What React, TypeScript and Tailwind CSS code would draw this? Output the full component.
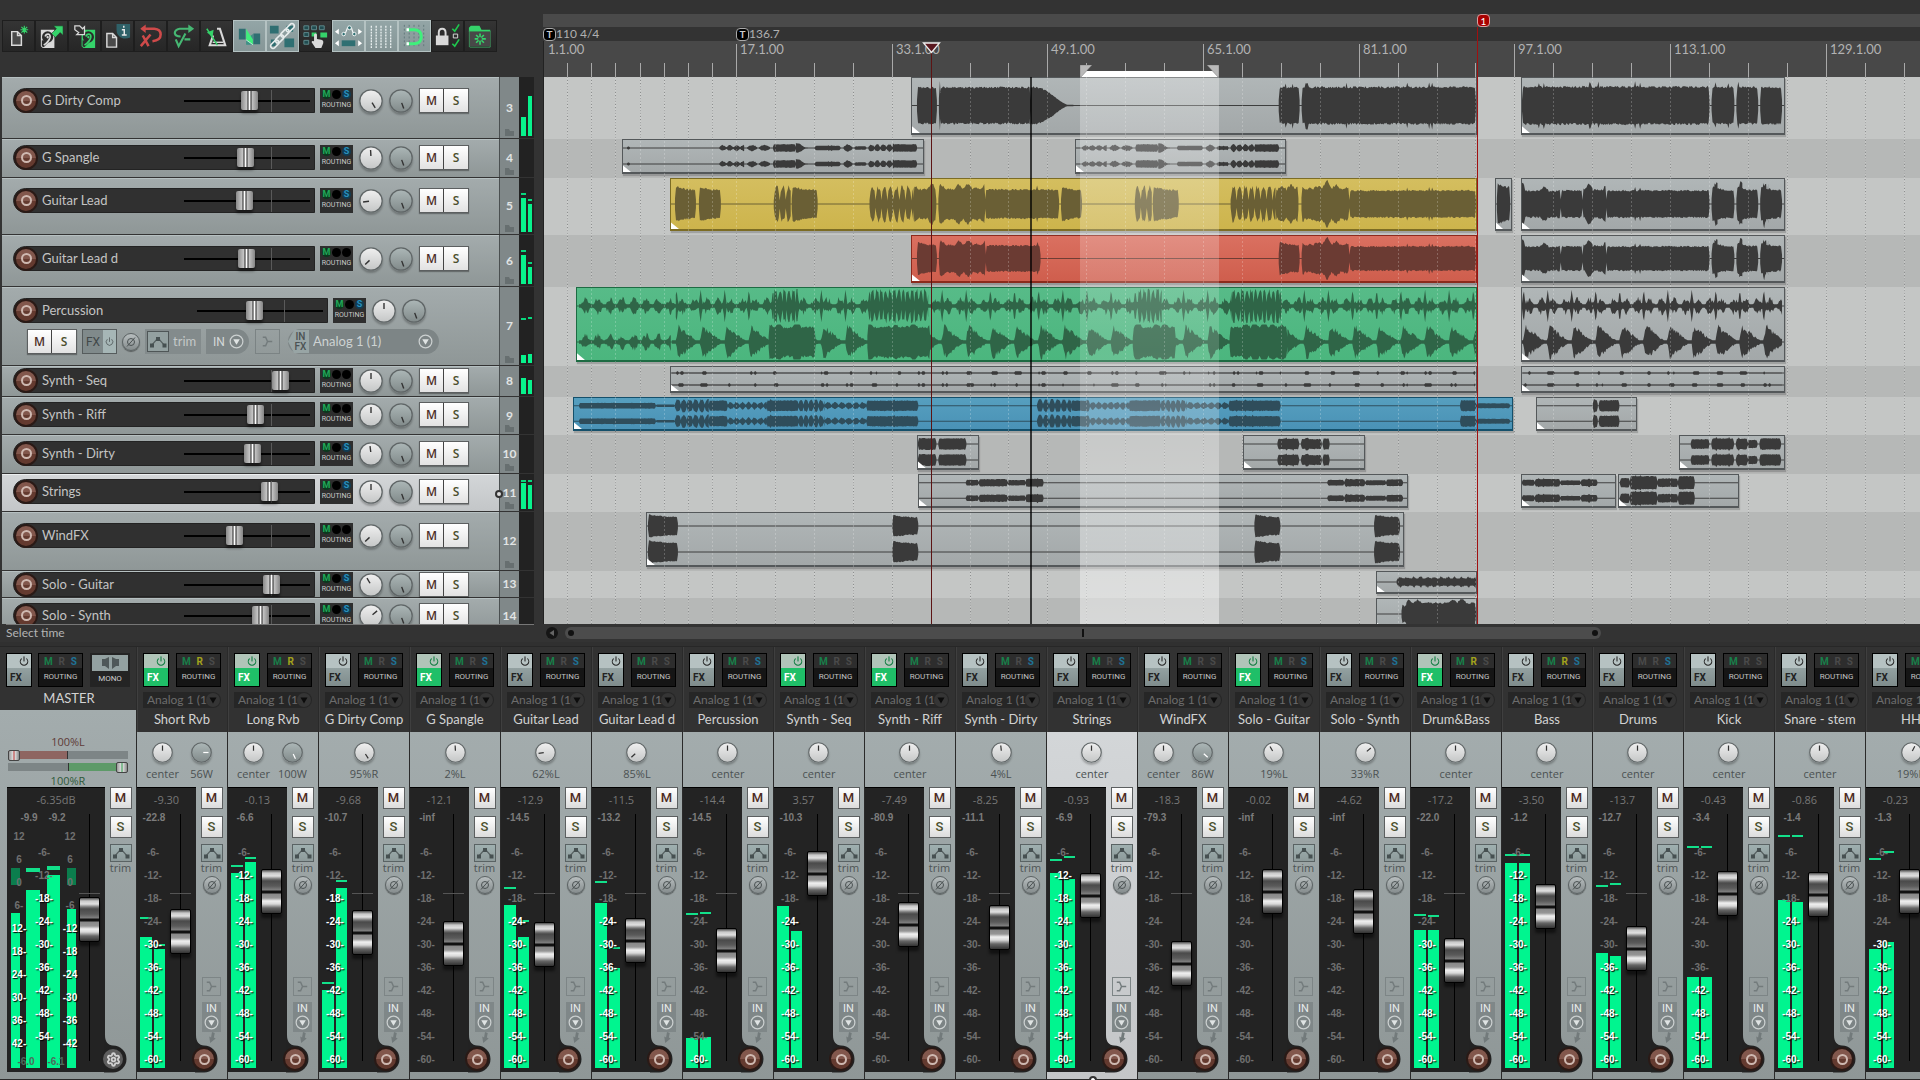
import React from "react";
import { Power, Settings } from "lucide-react";

/* ---------------------------------------------------------------- types */

type Seg = { a: number; b: number; amp: number; kind: "solid" | "decay" | "burst" | "beads" | "perc" | "percLow" | "taper" | "dots" | "spiky"; p?: number };
type Clip = { a: number; b: number; tone?: Tone; stereo?: boolean; segs: Seg[]; segs2?: Seg[] };
type Tone = "gray" | "yellow" | "red" | "green" | "blue";

const ORIGIN = 544;

/* ------------------------------------------------------------ waveforms */

const noise = (n: number) => {
  const v = Math.sin(n * 12.9898) * 43758.5453;
  return v - Math.floor(v);
};

function level(s: Seg, x: number, side: number) {
  const n = noise(x * 1.37 + side * 57.3 + s.amp * 11);
  const t = (x - s.a) / Math.max(1, s.b - s.a);
  const edge = Math.min(1, (x - s.a) / 1.5 + 0.3, (s.b - x) / 1.5 + 0.3);
  const p = s.p ?? 5;
  const ph = ((x - s.a) % p) / p;
  switch (s.kind) {
    case "solid":
      return s.amp * (0.93 + 0.12 * n + (noise(x * 3.1) > 0.95 ? 0.25 : 0)) * edge;
    case "spiky": {
      const k = Math.floor(x / 9);
      const d = Math.abs((x % 9) - 4.5) / 4.5;
      return s.amp * (0.78 + 0.14 * n + Math.max(0, noise(k * 2.7) - 0.3) * 0.75 * (1 - d)) * edge;
    }
    case "decay":
      return s.amp * (1.18 - 0.26 * Math.sin(Math.PI * Math.min(1, t * 1.2) * 0.5) + 0.14 * n) * edge;
    case "taper":
      return s.amp * Math.max(0.04, 0.5 + 0.5 * Math.cos(Math.PI * Math.pow(Math.min(1, t * 1.05), 1.25))) * (0.94 + 0.1 * n);
    case "burst":
      return s.amp * Math.max(0.25, Math.min(1, Math.sin(Math.PI * ph) * 1.5)) * (0.85 + 0.3 * n);
    case "beads":
      return s.amp * (0.3 + 0.8 * Math.abs(Math.sin(Math.PI * ph))) * (0.75 + 0.35 * n);
    case "perc": {
      const q = ((x - 675.7 + 2420) % 24.2) / 24.2;
      const r = ((x - 675.7 + 2420) % 12.1) / 12.1;
      const spike = s.amp > 0.5 ? Math.max(0, 1 - Math.min(q, 1 - q) * 12) * 0.95 : 0;
      const body = Math.pow(Math.max(0, Math.sin(Math.PI * r)), 1.4) * 0.42 * (0.45 + 0.8 * n);
      return Math.max(spike, body, 0.1);
    }
    case "percLow": {
      const q = ((x - 675.7 + 2420) % 24.2) / 24.2;
      const rise = Math.min(1, 0.2 + q * 9);
      return Math.max(0.1, s.amp * rise * Math.pow(1 - q, 1.25) * (0.75 + 0.5 * n));
    }
    case "dots": {
      const q = (x - 675.7 + 2420) % 24.2;
      return q < 7 && noise(Math.floor(x / 2) * 5.3 + s.amp * 70) > 0.4 ? 0.28 : 0.05;
    }
  }
}

function wave(segs: Seg[], off: number, cy: number, half: number) {
  return segs
    .map((s) => {
      const up: string[] = [];
      const down: string[] = [];
      for (let x = s.a; x <= s.b; x += 1) {
        up.push(`${(x - off).toFixed(1)} ${(cy - half * Math.min(0.98, level(s, x, 0))).toFixed(1)}`);
        down.unshift(`${(x - off).toFixed(1)} ${(cy + half * Math.min(0.98, level(s, x, 1))).toFixed(1)}`);
      }
      return `M${up.join("L")}L${down.join("L")}Z`;
    })
    .join("");
}

const sg = (a: number, b: number, amp: number, kind: Seg["kind"] = "solid", p?: number): Seg => ({ a, b, amp, kind, p });
const shift = (list: Seg[], d: number) => list.map((s) => ({ ...s, a: s.a + d, b: s.b + d }));
const tail = (amp: number) => [sg(1521, 1528, 0.85, "taper"), sg(1522, 1560, 0.62, "spiky"), sg(1560, 1582, amp), sg(1582, 1606, 0.66, "spiky"), sg(1606, 1710, amp), sg(1712, 1735, 0.56, "decay"), sg(1714, 1718, 0.85, "burst"), sg(1737, 1759, 0.56, "decay"), sg(1739, 1743, 0.85, "burst"), sg(1761, 1783, 0.56, "decay"), sg(1763, 1769, 0.85, "burst")];

const spangle = [sg(719, 744, 0.34, "beads", 7), sg(747, 757, 0.36, "beads", 10), sg(759, 770, 0.36, "beads", 11), sg(773, 796, 0.46, "solid"), sg(796, 808, 0.6, "taper"), sg(815, 841, 0.28, "solid"), sg(844, 853, 0.4, "beads", 9), sg(855, 867, 0.22), sg(869, 893, 0.44, "beads", 6), sg(893, 918, 0.46)];
const leadBursts = [sg(773, 790, 0.66, "burst", 6), sg(791, 817, 0.56, "decay")];
const riff = [sg(674, 708, 0.76, "burst", 6), sg(708, 727, 0.66), sg(727, 766, 0.46, "beads", 6), sg(766, 798, 0.68), sg(798, 824, 0.72, "burst", 5), sg(824, 866, 0.42, "beads", 7), sg(866, 918, 0.66)];
const dense = (a: number, b: number) => sg(a, b, 0.85, "burst", 4.4);

const lanes: { h: number; clips: Clip[] }[] = [
  {
    h: 62,
    clips: [
      { a: 911, b: 1477, segs: [sg(916, 936, 0.66), sg(938, 940, 0.9), sg(939, 1030, 0.66), sg(1030, 1073, 0.68, "taper"), sg(1279, 1300, 0.66), sg(1302, 1477, 0.67)] },
      { a: 1521, b: 1785, segs: [sg(1521, 1710, 0.68), sg(1712, 1735, 0.67), sg(1737, 1759, 0.67), sg(1761, 1783, 0.67)] },
    ],
  },
  {
    h: 39,
    clips: [
      { a: 622, b: 924, stereo: true, segs: [sg(626, 629, 0.2), ...spangle] },
      { a: 1075, b: 1286, stereo: true, segs: shift(spangle, 362) },
    ],
  },
  {
    h: 57,
    clips: [
      {
        a: 670, b: 1477, tone: "yellow",
        segs: [sg(674, 695, 0.58, "decay"), sg(698, 720, 0.56, "decay"), ...leadBursts, sg(869, 913, 0.66, "burst", 6), sg(913, 936, 0.68, "spiky"), sg(938, 985, 0.72, "spiky"), sg(985, 1059, 0.58), sg(1061, 1082, 0.56, "decay"), ...shift(leadBursts, 362), sg(1231, 1276, 0.66, "burst", 6), sg(1276, 1299, 0.68, "spiky"), sg(1302, 1350, 0.72, "spiky"), sg(1350, 1477, 0.54)],
      },
      { a: 1495, b: 1512, segs: [sg(1496, 1511, 0.68, "decay")] },
      { a: 1521, b: 1785, segs: tail(0.54) },
    ],
  },
  {
    h: 52,
    clips: [
      { a: 911, b: 1477, tone: "red", segs: [sg(916, 936, 0.6, "decay"), sg(938, 985, 0.72, "spiky"), sg(985, 1040, 0.58), sg(1279, 1300, 0.6, "decay"), sg(1302, 1350, 0.72, "spiky"), sg(1350, 1477, 0.54)] },
      { a: 1521, b: 1785, segs: tail(0.54) },
    ],
  },
  {
    h: 79,
    clips: [
      {
        a: 576, b: 1477, tone: "green", stereo: true,
        segs: [sg(578, 675, 0.4, "perc"), sg(675, 773, 0.9, "perc"), dense(773, 797), sg(797, 870, 0.9, "perc"), dense(870, 928), sg(928, 1138, 0.9, "perc"), dense(1138, 1162), sg(1162, 1232, 0.9, "perc"), dense(1232, 1280), sg(1280, 1477, 0.9, "perc")],
        segs2: [sg(578, 670, 0.5, "perc"), sg(671, 768, 0.95, "percLow"), sg(768, 815, 0.95, "spiky"), sg(815, 867, 0.95, "percLow"), sg(867, 930, 0.95, "spiky"), sg(930, 1133, 0.95, "percLow"), sg(1133, 1176, 0.95, "spiky"), sg(1176, 1230, 0.95, "percLow"), sg(1230, 1288, 0.95, "spiky"), sg(1288, 1477, 0.95, "percLow")],
      },
      { a: 1521, b: 1785, stereo: true, segs: [sg(1521, 1783, 0.9, "perc")], segs2: [sg(1521, 1783, 0.95, "percLow")] },
    ],
  },
  {
    h: 31,
    clips: [
      { a: 670, b: 1477, stereo: true, segs: [sg(671, 1476, 0.1, "dots")], segs2: [sg(671, 1476, 0.2, "dots")] },
      { a: 1521, b: 1785, stereo: true, segs: [sg(1522, 1783, 0.3, "dots")], segs2: [sg(1522, 1783, 0.4, "dots")] },
    ],
  },
  {
    h: 38,
    clips: [
      { a: 573, b: 1513, tone: "blue", stereo: true, segs: [sg(578, 655, 0.36), sg(655, 674, 0.16), ...riff, ...shift(riff, 363), sg(1461, 1477, 0.7), sg(1477, 1511, 0.32)] },
      { a: 1536, b: 1637, stereo: true, segs: [sg(1593, 1598, 0.75, "decay"), sg(1599, 1620, 0.72)] },
    ],
  },
  {
    h: 39,
    clips: [
      { a: 917, b: 979, stereo: true, segs: [sg(917, 936, 0.72), sg(938, 967, 0.7)] },
      { a: 1243, b: 1365, stereo: true, segs: [sg(1277, 1299, 0.66), sg(1301, 1322, 0.62), sg(1323, 1330, 0.7)] },
      { a: 1679, b: 1785, stereo: true, segs: [sg(1690, 1709, 0.6), sg(1711, 1734, 0.7), sg(1736, 1748, 0.66), sg(1748, 1758, 0.5), sg(1760, 1782, 0.7)] },
    ],
  },
  {
    h: 38,
    clips: [
      { a: 918, b: 1408, stereo: true, segs: [sg(965, 978, 0.36), sg(978, 1007, 0.46), sg(1007, 1025, 0.34), sg(1025, 1043, 0.5), sg(1328, 1345, 0.36), sg(1345, 1366, 0.46), sg(1366, 1387, 0.32), sg(1387, 1404, 0.44)] },
      { a: 1521, b: 1616, stereo: true, segs: [sg(1521, 1534, 0.38), sg(1534, 1560, 0.48), sg(1560, 1581, 0.3), sg(1581, 1598, 0.44)] },
      { a: 1618, b: 1739, stereo: true, segs: [sg(1619, 1629, 0.6), sg(1629, 1657, 0.85), sg(1657, 1678, 0.54), sg(1678, 1695, 0.84)] },
    ],
  },
  {
    h: 59,
    clips: [{ a: 646, b: 1404, stereo: true, segs: [sg(647, 677, 0.72, "decay"), sg(892, 918, 0.68, "decay"), sg(1255, 1281, 0.7, "decay"), sg(1375, 1401, 0.7, "decay")] }],
  },
  { h: 27, clips: [{ a: 1376, b: 1477, segs: [sg(1396, 1477, 0.5, "beads", 7), sg(1398, 1477, 0.36)] }] },
  { h: 37, clips: [{ a: 1376, b: 1477, segs: [sg(1401, 1410, 0.6, "spiky"), sg(1405, 1477, 0.86, "spiky")] }] },
];

const clipTone: Record<Tone, { box: string; wave: string }> = {
  gray: { box: "border-[#54585a] from-[#b0b6b7] to-[#a3a8a9]", wave: "fill-[#3a3a3a] stroke-[#3a3a3a]" },
  yellow: { box: "border-[#7c6c24] from-[#d4be5f] to-[#cdb44c]", wave: "fill-[#6a5f35] stroke-[#6a5f35]" },
  red: { box: "border-[#8c2a1d] from-[#da7060] to-[#cf5e4d]", wave: "fill-[#6b3b33] stroke-[#6b3b33]" },
  green: { box: "border-[#1d6b43] from-[#57bb88] to-[#4bb67e]", wave: "fill-[#2f6547] stroke-[#2f6547]" },
  blue: { box: "border-[#15506b] from-[#569fbf] to-[#4a92b6]", wave: "fill-[#2f4d5b] stroke-[#2f4d5b]" },
};

function ClipView({ clip, h }: { clip: Clip; h: number }) {
  const tone = clipTone[clip.tone ?? "gray"];
  const w = clip.b - clip.a;
  const chans = clip.stereo ? [0.25, 0.75] : [0.5];
  const half = h / (clip.stereo ? 4 : 2);
  return (
    <div className={`absolute top-0 border border-b-2 bg-linear-to-b shadow-[1px_2px_1px_rgba(0,0,0,0.18)] ${tone.box}`} style={{ left: clip.a - ORIGIN, width: w, height: h }}>
      <svg className={`block h-full w-full overflow-hidden ${tone.wave}`} viewBox={`0 0 ${w} ${h}`} preserveAspectRatio="none">
        {chans.map((c, i) => (
          <g key={c}>
            <line x1="0" x2={w} y1={h * c} y2={h * c} strokeWidth="1" />
            <path d={wave(i === 1 && clip.segs2 ? clip.segs2 : clip.segs, clip.a, h * c, half)} stroke="none" />
          </g>
        ))}
        <path d={`M0 ${h - 7}L8 ${h}H0Z`} fill="#fff" stroke="none" />
      </svg>
    </div>
  );
}

/* ------------------------------------------------------------- timeline */

const minor: number[] = [567, 591, 615, 640, 664, 688, 712, 736];
for (let i = 1; i < 32; i++) minor.push(Math.round(736 + i * 38.92));
const majors = [
  { x: 544, t: "1.1.00" },
  { x: 736, t: "17.1.00" },
  { x: 892, t: "33.1.00" },
  { x: 1047, t: "49.1.00" },
  { x: 1203, t: "65.1.00" },
  { x: 1359, t: "81.1.00" },
  { x: 1514, t: "97.1.00" },
  { x: 1670, t: "113.1.00" },
  { x: 1826, t: "129.1.00" },
];

function TempoFlag({ x, text }: { x: number; text: string }) {
  return (
    <div className="absolute top-0 flex h-[14px] items-center" style={{ left: x - ORIGIN }}>
      <span className="flex h-[13px] w-[13px] items-center justify-center rounded border border-[#aaa] bg-black text-[10px] leading-none font-bold text-[#ccc]">T</span>
      <span className="text-xs text-[#b0b0b0]">{text}</span>
    </div>
  );
}

function Ruler() {
  return (
    <div className="pt-[14px]">
      <div className="h-[13px] bg-[#4a4a4a]" />
      <div className="relative h-[14px] bg-[#333]">
        <TempoFlag x={544} text="110 4/4" />
        <TempoFlag x={737} text="136.7" />
      </div>
      <div className="relative h-9 overflow-hidden border-l border-[#222] bg-[#484848]">
        <svg className="absolute inset-0 h-full w-full" stroke="#a9a9a9" strokeWidth="1">
          {minor.map((x) => (
            <line key={x} x1={x - ORIGIN + 0.5} x2={x - ORIGIN + 0.5} y1="22" y2="36" />
          ))}
          {majors.slice(1).map((m) => (
            <line key={m.x} x1={m.x - ORIGIN + 0.5} x2={m.x - ORIGIN + 0.5} y1="3" y2="36" />
          ))}
        </svg>
        {majors.map((m) => (
          <span key={m.x} className="absolute top-0 text-[13px] leading-[17px] text-[#b2b2b2]" style={{ left: m.x - ORIGIN + 4 }}>
            {m.t}
          </span>
        ))}
      </div>
    </div>
  );
}

function Grid({ light }: { light?: boolean }) {
  return (
    <svg className="pointer-events-none absolute inset-0 h-full w-full" stroke={light ? "rgba(255,255,255,0.22)" : "#8d8f8f"} strokeDasharray={light ? "2 2" : "1 2"}>
      {minor.map((x) => (
        <line key={x} x1={x - ORIGIN + 0.5} x2={x - ORIGIN + 0.5} y1="0" y2="100%" />
      ))}
    </svg>
  );
}

function Arrange() {
  return (
    <section className="relative min-w-0 flex-1 overflow-hidden" aria-label="Arrangement">
      <Ruler />
      <div id="lanes" className="relative h-[547px] overflow-hidden border-l border-[#222]">
        {lanes.map((lane, i) => (
          <div key={i} className={i % 2 ? "bg-[#b6b8b7]" : "bg-[#c4c6c5]"} style={{ height: lane.h }} />
        ))}
        <Grid />
        <div className="absolute inset-0">
          {lanes.map((lane, i) => (
            <div key={i} className="relative" style={{ height: lane.h }}>
              {lane.clips.map((c) => (
                <ClipView key={c.a} clip={c} h={lane.h - 4} />
              ))}
            </div>
          ))}
        </div>
        <Grid light />
        <div className="absolute inset-y-0 left-[536px] w-[139px] bg-linear-to-b from-white/30 via-white/15 to-white/45" />
        <div className="absolute inset-y-0 left-[486px] w-[2px] bg-black/70" />
      </div>
      {/* time selection handles, cursors and the project marker */}
      <svg className="absolute top-[65px] left-[537px] h-3 w-[139px]">
        <path d="M0 6H139V12H0Z" fill="#fff" />
        <path d="M0 0H12L1 12H0ZM139 0H127L138 12H139Z" fill="#b9b9b9" stroke="#777" strokeWidth="0.5" />
      </svg>
      <div className="absolute top-[43px] left-[388px] h-[581px] w-px bg-[#5c1414]" />
      <svg className="absolute top-[42px] left-[379px] h-[12px] w-[19px]">
        <path d="M1.5 1H17.500L9.500 10.500Z" fill="#5a1820" stroke="#eee" strokeWidth="1.3" />
      </svg>
      <div className="absolute top-[27px] left-[934px] h-[597px] w-px bg-[#a01010]" />
      <span className="absolute top-[14px] left-[934px] flex h-[13px] w-[13px] items-center justify-center rounded border border-[#d9a0a0] bg-[#a80000] text-[10px] leading-none text-white">1</span>
      <div className="flex h-[18px] items-center gap-1 pl-[3px]">
        <button aria-label="Scroll left" className="flex h-3 w-3 items-center justify-center rounded-full bg-[#151515]">
          <svg viewBox="0 0 8 8" className="h-2 w-2"><path d="M6 1V7L1.500 4Z" fill="#666" /></svg>
        </button>
        <div className="ml-[3px] flex h-3 w-[1036px] items-center justify-between rounded-md bg-[#4c4c4c] px-[3px]" role="scrollbar" aria-controls="lanes" aria-valuenow={0}>
          <span className="h-[6px] w-[6px] rounded-full bg-[#111]" />
          <span className="h-2 w-[2px] bg-[#111]" />
          <span className="h-[6px] w-[6px] rounded-full bg-[#111]" />
        </div>
      </div>
    </section>
  );
}

/* -------------------------------------------------------------- toolbar */

const G = "#35d36a";
const W = "#d9d9d9";
const T = "#2f6f72";

const Disk = ({ c, x }: { c: string; x: number }) => (
  <g transform={`translate(${x} 9)`}>
    <path d="M1 0H15V19H3L1 17Z" fill={c} />
    <circle cx="8" cy="7.500" r="5.800" fill="#2b2b2b" />
    <path d="M2 11V17L4 18L10 12Z" fill="#2b2b2b" />
    <path d="M5.500 7Q6 4.500 8.500 4.500Q11 5 10.500 8Q9.500 12 4 16" fill="none" stroke={c} strokeWidth="1.700" />
    <circle cx="8" cy="7.800" r="1.200" fill={c} />
  </g>
);
const Doc = ({ x, y }: { x: number; y: number }) => (
  <path transform={`translate(${x} ${y})`} d="M1 1H7L11 5V15H1ZM7 1V5H11" fill="#4a4a4a" stroke={W} strokeWidth="1.500" />
);

const tools: { label: string; on?: boolean; icon: React.ReactNode }[] = [
  { label: "New project", icon: <><Doc x={8} y={10} /><path d="M22 5V13M18 9H26M19 6L25 12M25 6L19 12" stroke={G} strokeWidth="1.200" /></> },
  { label: "Open project", icon: <><Disk c={W} x={4} /><path d="M18 5H28V15L25 12L20 17L16 13L21 8Z" fill={G} stroke="#222" strokeWidth="0.600" /></> },
  { label: "Save project", icon: <><Disk c={G} x={12} /><path d="M6 5H11L14 8L16 6V14H8L10 12L6 9Z" fill="#333" stroke={W} strokeWidth="1.300" /></> },
  { label: "Project settings", icon: <><Doc x={4} y={12} /><path d="M15 3H29V17Q26 18.500 22 18Q15 16 15 9Z" fill="#2f6168" /><path d="M22.500 5V7M20.500 9H23V14M20.500 14.500H25.500" stroke="#e8e8e8" strokeWidth="1.500" fill="none" /></> },
  { label: "Undo", icon: <g fill="none" stroke="#cf4a4a" strokeWidth="2.600"><path d="M7 8H20Q26.500 8.500 26.500 14Q26.500 20 18 21" /><path d="M11 3.500V12.500L5.500 8Z" fill="#cf4a4a" stroke="none" /><path d="M6 26L16 14M8 15L14 26" /></g> },
  { label: "Redo", icon: <g fill="none" stroke="#46b873" strokeWidth="2.200"><path d="M23 8H12Q7 9 7 12.500Q7.500 16 13 16" /><path d="M21 3.500V12.500L27 8Z" fill="#46b873" stroke="none" /><path d="M8 19L11 26L18 13M17 19H23" /></g> },
  { label: "Metronome", icon: <><path d="M16.500 8H19.500L25 25H9L12.500 15" fill="none" stroke={W} strokeWidth="2.200" /><path d="M12 22H23" stroke={W} strokeWidth="1.500" /><path d="M6 8L17 25" stroke={G} strokeWidth="1.500" /><path d="M6 12L13 9L12 16Z" fill={G} /></> },
  { label: "Auto crossfade", on: true, icon: <><path d="M5 8H12V19H5ZM20 13H27V24H20Z" fill={T} /><path d="M12.500 19L19.500 13.500V24.500H12.500Z" fill="#3f8f86" /><path d="M12.500 8L19.500 19V24.500L12.500 19Z" fill="#3ff07c" /><path d="M12.500 19.500L19.500 24.500" stroke="#dfe" strokeWidth="0.800" /></> },
  { label: "Item grouping", on: true, icon: <><path d="M3 5H12V13H3ZM18 18H28V27H18ZM4 19H9V26H4ZM20 5H27V11H20Z" fill={T} /><g fill="none" stroke="#e6ecec" strokeWidth="1.700"><rect x="-5" y="-2.500" width="10" height="5" rx="2.500" transform="translate(8 24) rotate(-45)" /><rect x="-5" y="-2.500" width="10" height="5" rx="2.500" transform="translate(13 18.500) rotate(-45)" /><rect x="-5" y="-2.500" width="10" height="5" rx="2.500" transform="translate(18.500 12.500) rotate(-45)" /><rect x="-5" y="-2.500" width="10" height="5" rx="2.500" transform="translate(24 7) rotate(-45)" /></g></> },
  { label: "Ripple editing", icon: <><g fill="#214c50" stroke="#5f8a8c" strokeWidth="1"><path d="M4 5H9V9H4ZM12 5H17V9H12ZM20 5H25V9H20ZM4 12H9V16H4ZM4 20H9V24H4Z" /></g><path d="M12 12H17V16H12ZM21 12H28V17H21Z" fill={G} /><path d="M14.500 14Q16 12 17.500 14V18.500L22 19.500Q24.500 20 24 23L22 28H16L12 22Q12 20 14.500 21Z" fill={W} /></> },
  { label: "Envelope points", on: true, icon: <><path d="M10 13L13 12L15 7L19 7L21 13" fill="none" stroke="#f2f6f6" strokeWidth="1.300" /><g fill={T} stroke="#f2f6f6"><circle cx="17" cy="7" r="2" /><circle cx="11" cy="13.500" r="1.800" /><circle cx="22" cy="13.500" r="1.800" /></g><path d="M6 8V14L2 11ZM26 8V14L30 11ZM6 20V26L2 23ZM26 20V26L30 23Z" fill="#fff" /><path d="M9 20H23V26H9Z" fill={T} /></> },
  { label: "Grid lines", on: true, icon: <g stroke="#eef4f4" strokeWidth="1.300" strokeDasharray="2 1"><path d="M5.500 5V28M10.500 5V28M15.500 5V28M20.500 5V28M25.500 5V28" /></g> },
  { label: "Snapping", on: true, icon: <><g stroke="#62797b" strokeDasharray="2 2"><path d="M5.500 4V28M10.500 4V28M15.500 4V28M20.500 4V28M25.500 4V28" /></g><path d="M8 9H16Q23 9.500 23 16Q23 23 16 23.500H8" fill="none" stroke="#3ff07c" strokeWidth="3" /><path d="M9 7.500V10.500M9 22V25" stroke="#fff" strokeWidth="2.500" /></> },
  { label: "Locking", icon: <><path d="M7 16V12Q7 8 10.500 8Q14 8 14 12V16" fill="none" stroke={W} strokeWidth="2" /><path d="M4 15H17V25H4Z" fill={W} /><path d="M21 8L23.500 10.500L28 3.500M21 23.500L23.500 26L28 19" fill="none" stroke="#1fc84e" strokeWidth="1.700" /><path d="M22 13.500H26.500V17.500H22Z" fill="none" stroke={W} /></> },
  { label: "Resources", icon: <><path d="M4 9V7L6 5H15L17 9H26V11H4Z" fill={G} /><path d="M4.500 10V27M26 10V27H5" stroke="#3d9b5e" fill="none" /><path d="M5 11H26V26H5Z" fill="#484848" /><path d="M15.500 13V24.500M10 18.500H21.500M11.500 14.500L19.500 22.500M19.500 14.500L11.500 22.500" stroke={G} strokeWidth="1.700" /><circle cx="15.500" cy="18.500" r="2" fill="#484848" /></> },
];

function Toolbar() {
  return (
    <div className="flex h-[77px] items-start pt-5 pl-[2px]">
      {tools.map((t) => (
        <button key={t.label} aria-label={t.label} aria-pressed={!!t.on} className={`h-8 w-[33px] border ${t.on ? "border-[#b4c2c2] bg-linear-to-b from-[#93a5a6] to-[#869697]" : "border-[#1e1e1e] bg-linear-to-b from-[#343434] to-[#262626]"}`}>
          <svg viewBox="0 0 32 31" className="h-full w-full">{t.icon}</svg>
        </button>
      ))}
    </div>
  );
}

/* ------------------------------------------------------ shared controls */

function Knob({ angle, size = 24, dim, light }: { angle: number; size?: number; dim?: boolean; light?: boolean }) {
  const id = dim ? "knobDim" : "knobLit";
  return (
    <button aria-label={dim ? "Width" : "Pan"} className="shrink-0 rounded-full shadow-[0_2px_2px_rgba(0,0,0,0.25)]">
      <svg width={size} height={size} viewBox="0 0 24 24" className="block">
        <circle cx="12" cy="12" r="11.200" fill={`url(#${id})`} stroke="#5f6566" strokeWidth="1.300" />
        <line x1="12" y1="10" x2="12" y2="4" stroke={light ? "#fff" : "#333"} strokeWidth="1.400" transform={`rotate(${angle} 12 12)`} />
      </svg>
    </button>
  );
}

function RecordButton({ name }: { name: string }) {
  return (
    <button aria-label={`Record arm ${name}`} className="flex h-6 w-6 shrink-0 items-center justify-center rounded-full border-2 border-[#2a1a16] bg-linear-to-b from-[#82574c] from-50% to-[#643a2f] to-50%">
      <span className="h-[11px] w-[11px] rounded-full border-2 border-[#cfb9b1]" />
    </button>
  );
}

function MuteSolo() {
  return (
    <div className="flex h-[25px] shrink-0 border border-[#5c5f60] font-['Open_Sans'] text-xs font-semibold shadow-[0_1px_1px_rgba(0,0,0,0.3)]">
      <button className="w-6 border-r border-[#444] bg-linear-to-b from-white to-[#e2e2e2] text-[#4d2f29]">M</button>
      <button className="w-6 bg-linear-to-b from-white to-[#e2e2e2] text-[#4a4f2d]">S</button>
    </div>
  );
}

const EnvIcon = () => (
  <svg viewBox="0 0 20 14" className="h-[14px] w-5 shrink-0">
    <path d="M3.500 10.500L9 4L11 4L16.500 10.500" fill="none" stroke="#566061" strokeWidth="1.200" />
    <path d="M2 8.500H6V12.500H2ZM8 2H12V6H8ZM14.500 8.500H18.500V12.500H14.500Z" fill="#465051" />
  </svg>
);
const RouteIcon = () => (
  <svg viewBox="0 0 18 18" className="h-[17px] w-[17px]"><path d="M4 4.500H7L9 9L7 13.500H4M9 9H14" fill="none" stroke="#737b7c" strokeWidth="1.500" /></svg>
);
function Phase() {
  return (
    <button aria-label="Phase invert" className="flex h-[18px] w-[18px] shrink-0 items-center justify-center rounded-full border border-[#5b6263] bg-linear-to-b from-[#b8bebf] to-[#858c8d] shadow-[0_1px_1px_rgba(0,0,0,0.4)]">
      <svg viewBox="0 0 12 12" className="h-3 w-3" stroke="#4b5253" fill="none"><circle cx="6" cy="6" r="3.500" /><path d="M2 10.500L10 1.500" /></svg>
    </button>
  );
}
const DownCircle = () => (
  <svg viewBox="0 0 16 16" className="h-[15px] w-[15px] shrink-0"><circle cx="8" cy="8" r="6.800" fill="#7c8485" stroke="#ccd1d1" strokeWidth="1.300" /><path d="M4.500 5.500H11.500L8 11.500Z" fill="#dfe3e3" /></svg>
);

/* -------------------------------------------------------- track control */

type Track = { n: number; name: string; h: number; pt: number; fader: number; s: boolean; pan: number; m?: [number, number]; pk?: [number, number]; folder?: boolean; sel?: boolean; open?: boolean };

const tracks: Track[] = [
  { n: 3, name: "G Dirty Comp", h: 62, pt: 11, fader: 249, s: true, pan: 148, m: [19, 40], folder: true },
  { n: 4, name: "G Spangle", h: 39, pt: 6, fader: 245, s: true, pan: -3, folder: true },
  { n: 5, name: "Guitar Lead", h: 57, pt: 10, fader: 244, s: true, pan: -97, m: [34, 28], pk: [37, 31], folder: true },
  { n: 6, name: "Guitar Lead d", h: 52, pt: 11, fader: 246, s: false, pan: -133, m: [29, 17], pk: [32, 20], folder: true },
  { n: 7, name: "Percussion", h: 79, pt: 11, fader: 254, s: true, pan: 0, m: [8, 9], pk: [43, 44], folder: true, open: true },
  { n: 8, name: "Synth - Seq", h: 31, pt: 2, fader: 280, s: false, pan: 0, m: [16, 14] },
  { n: 9, name: "Synth - Riff", h: 38, pt: 5, fader: 255, s: false, pan: 0, folder: true },
  { n: 10, name: "Synth - Dirty", h: 39, pt: 6, fader: 252, s: true, pan: -7, folder: true },
  { n: 11, name: "Strings", h: 38, pt: 5, fader: 269, s: true, pan: 0, m: [26, 24], pk: [27, 27], folder: true, sel: true },
  { n: 12, name: "WindFX", h: 59, pt: 11, fader: 234, s: false, pan: -133, folder: true },
  { n: 13, name: "Solo - Guitar", h: 27, pt: 0, fader: 271, s: true, pan: -30 },
  { n: 14, name: "Solo - Synth", h: 37, pt: 5, fader: 260, s: true, pan: 50 },
];

function TrackRow({ t }: { t: Track }) {
  const base = t.open ? 197 : 184;
  return (
    <li className="flex border-b border-[#333]" style={{ height: t.h }}>
      <div className={`relative w-[497px] shrink-0 border-t bg-linear-to-b pl-[11px] ${t.sel ? "border-[#eceff0] from-[#d3d6d8] to-[#c3c6c8]" : "border-[#b6c0c1] from-[#a3abac] to-[#8f9797]"}`} style={{ paddingTop: t.pt > 0 ? t.pt - 1 : 0 }}>
        <div className="flex h-[25px] items-center">
          <div className={`flex h-[25px] shrink-0 items-center rounded-l-full border border-[#232323] bg-[#303030] ${t.open ? "w-[315px]" : "w-[302px]"}`}>
            <RecordButton name={t.name} />
            <span className={`pb-[2px] pl-1 text-[13px] leading-5 whitespace-nowrap text-[#c4c4c4] ${t.open ? "w-[159px]" : "w-[146px]"}`}>{t.name}</span>
            <div className="relative flex items-center">
              <span className="absolute inset-x-0 h-[2px] bg-black" />
              <span className="absolute left-[87px] h-[22px] w-px bg-[#5a5a5a]" />
              <input
                type="range" aria-label={`${t.name} volume`} min={0} max={109} defaultValue={t.fader - base - 8}
                className="relative h-[21px] w-[126px] appearance-none bg-transparent [&::-webkit-slider-thumb]:h-[19px] [&::-webkit-slider-thumb]:w-[17px] [&::-webkit-slider-thumb]:appearance-none [&::-webkit-slider-thumb]:rounded-xs [&::-webkit-slider-thumb]:bg-[linear-gradient(90deg,#8a8a8a_0,#c9c9c9_6px,#222_7px,#fff_8px,#fff_9px,#222_10px,#c4c4c4_11px,#858585_17px)] [&::-webkit-slider-thumb]:shadow-[0_3px_3px_rgba(0,0,0,0.5)]"
              />
            </div>
          </div>
          <button aria-label={`${t.name} routing`} className="ml-[5px] flex h-[25px] w-[33px] shrink-0 flex-col items-center bg-[#2e2e2e] pt-[2px]">
            <span className="flex gap-px font-[Roboto] text-[9px] leading-[9px] font-bold">
              <span className="h-[9px] w-[9px] rounded-full bg-[#0a3a1e] text-[#22a85a]">M</span>
              <span className="h-[9px] w-[9px] rounded-full bg-black" />
              <span className={`h-[9px] w-[9px] rounded-full ${t.s ? "bg-[#103c54] text-[#2a90bb]" : "bg-black"}`}>{t.s ? "S" : ""}</span>
            </span>
            <span className="mt-px font-[Roboto] text-[7px] leading-[10px] text-[#c9c9c9]">ROUTING</span>
          </button>
          <div className="ml-[6px] flex gap-[6px]">
            <Knob angle={t.pan} />
            <Knob angle={160} dim />
          </div>
          {!t.open && <div className="ml-[6px] flex"><MuteSolo /></div>}
        </div>
        {t.open && (
          <div className="mt-[6px] ml-[14px] flex h-[25px] items-center text-[#4b5253]">
            <MuteSolo />
            <button aria-label="Track effects" className="ml-[5px] flex h-[25px] w-[35px] items-center border border-[#565c5d] bg-[#808a8b] font-[Roboto] text-xs">
              <span className="w-5 text-center text-[#414849]">FX</span>
              <span className="flex h-full flex-1 items-center justify-center bg-[#a6b6b6]"><Power size={9} /></span>
            </button>
            <span className="mx-[5px]"><Phase /></span>
            <button className="flex h-[25px] w-14 items-center bg-[#838b8c] text-[13px] text-[#c3c8c8]">
              <span className="ml-[2px] flex h-[21px] w-[22px] shrink-0 items-center justify-center border border-[#4f5657] bg-[#93a0a0]"><EnvIcon /></span>
              <span className="pl-1">trim</span>
            </button>
            <button className="ml-[5px] flex h-[25px] w-[43px] items-center justify-between rounded-r-full bg-[#7f8788] pr-[5px] pl-[7px] font-[Roboto] text-xs text-[#d5d9d9]">IN<DownCircle /></button>
            <button aria-label="Input monitor" className="ml-[6px] flex h-[25px] w-[25px] items-center justify-center border border-[#7b8384]"><RouteIcon /></button>
            <div className="relative ml-2 flex h-[25px] w-[151px] items-center rounded-full bg-[#7d8586]">
              <button className="flex h-[23px] w-[21px] shrink-0 flex-col items-center justify-center bg-[#98a5a5] pl-1 font-[Roboto] text-[10px] leading-[10px] font-medium [clip-path:polygon(6px_0,100%_0,100%_100%,6px_100%,0_50%)]"><span>IN</span><span>FX</span></button>
              <select aria-label="Track input" className="min-w-0 flex-1 appearance-none bg-transparent pl-1 text-[13px] text-[#ced3d3]"><option>Analog 1 (1)</option></select>
              <span className="pointer-events-none absolute right-[6px]"><DownCircle /></span>
            </div>
          </div>
        )}
        {t.sel && <span className="absolute top-[15px] -right-[4px] z-10 h-2 w-2 rounded-full border-2 border-[#333] bg-[#ddd]" />}
      </div>
      <div className="relative flex w-[20px] shrink-0 items-center justify-center border-l border-[#4a4f50] bg-[#808889] text-xs font-bold text-[#e1e4e4]">
        {t.n}
        {t.folder && <svg viewBox="0 0 9 7" className="absolute bottom-[2px] left-[5px] h-[7px] w-[9px]"><path d="M0 0H4L5 2H9V7H0Z" fill="#676f70" /></svg>}
      </div>
      <div className="flex w-[15px] shrink-0 items-end gap-[2px] bg-[#222] px-[2px] pb-[2px]">
        {[0, 1].map((i) => (
          <div key={i} className="relative h-full w-[5px]">
            {t.m && <div className="absolute bottom-0 w-full bg-[#08f28c]" style={{ height: t.m[i] }} />}
            {t.pk && <div className="absolute h-[2px] w-full bg-[#08d87e]" style={{ bottom: t.pk[i] }} />}
          </div>
        ))}
      </div>
    </li>
  );
}

/* ---------------------------------------------------------------- mixer */

type Strip = { name: string; fx?: boolean; r?: string; pan: string; ang: number; w?: string; wAng?: number; vol: string; peak: string; fader: number; m?: [number, number]; pk?: [number, number]; sel?: boolean };

const strips: Strip[] = [
  { name: "Short Rvb", fx: true, r: "MR", pan: "center", ang: 0, w: "56W", wAng: 90, vol: "-9.30", peak: "-22.8", fader: 909, m: [937, 949], pk: [918, 945] },
  { name: "Long Rvb", fx: true, r: "MR", pan: "center", ang: 0, w: "100W", wAng: 155, vol: "-0.13", peak: "-6.6", fader: 869, m: [873, 862], pk: [866, 858] },
  { name: "G Dirty Comp", r: "MS", pan: "95%R", ang: 148, vol: "-9.68", peak: "-10.7", fader: 910, m: [990, 888], pk: [983, 881] },
  { name: "G Spangle", fx: true, r: "MS", pan: "2%L", ang: -3, vol: "-12.1", peak: "-inf", fader: 921 },
  { name: "Guitar Lead", r: "MS", pan: "62%L", ang: -97, vol: "-12.9", peak: "-14.5", fader: 922, m: [905, 937], pk: [888, 921] },
  { name: "Guitar Lead d", r: "M", pan: "85%L", ang: -133, vol: "-11.5", peak: "-13.2", fader: 918, m: [903, 968], pk: [882, 948] },
  { name: "Percussion", r: "MS", pan: "center", ang: 0, vol: "-14.4", peak: "-14.5", fader: 928, m: [1038, 1037], pk: [914, 913] },
  { name: "Synth - Seq", fx: true, r: "M", pan: "center", ang: 0, vol: "3.57", peak: "-10.3", fader: 851, m: [906, 931] },
  { name: "Synth - Riff", fx: true, r: "M", pan: "center", ang: 0, vol: "-7.49", peak: "-80.9", fader: 902 },
  { name: "Synth - Dirty", r: "MS", pan: "4%L", ang: -6, vol: "-8.25", peak: "-11.1", fader: 905 },
  { name: "Strings", r: "MS", pan: "center", ang: 0, vol: "-0.93", peak: "-6.9", fader: 873, m: [873, 879], pk: [860, 857], sel: true },
  { name: "WindFX", r: "M", pan: "center", ang: 0, w: "86W", wAng: 132, vol: "-18.3", peak: "-79.3", fader: 941 },
  { name: "Solo - Guitar", fx: true, r: "MS", pan: "19%L", ang: -30, vol: "-0.02", peak: "-inf", fader: 869 },
  { name: "Solo - Synth", r: "MS", pan: "33%R", ang: 50, vol: "-4.62", peak: "-inf", fader: 889 },
  { name: "Drum&Bass", fx: true, r: "MR", pan: "center", ang: 0, vol: "-17.2", peak: "-22.0", fader: 938, m: [930, 930], pk: [915, 916] },
  { name: "Bass", r: "MRS", pan: "center", ang: 0, vol: "-3.50", peak: "-1.2", fader: 884, m: [863, 863], pk: [855, 855] },
  { name: "Drums", r: "S", pan: "center", ang: 0, vol: "-13.7", peak: "-12.7", fader: 926, m: [953, 956], pk: [886, 884] },
  { name: "Kick", r: "M", pan: "center", ang: 0, vol: "-0.43", peak: "-3.4", fader: 871, m: [977, 977], pk: [847, 847] },
  { name: "Snare - stem", r: "M", pan: "center", ang: 0, vol: "-0.86", peak: "-1.4", fader: 872, m: [900, 902], pk: [836, 836] },
  { name: "HH", r: "M", pan: "19%R", ang: 28, vol: "-0.23", peak: "-1.3", fader: 869, m: [949, 942], pk: [859, 852] },
];

const METER_BOTTOM = 1068;

function FxButton({ on }: { on?: boolean }) {
  return (
    <button aria-label="Effects" className="flex h-[34px] w-[26px] shrink-0 flex-col border border-black">
      <span className={`flex h-[14px] w-full items-center justify-end pr-[2px] ${on ? "bg-[#b0c4b8] text-[#0a7a3c]" : "bg-[#b6c2c2] text-[#222]"}`}><Power size={10} strokeWidth={2.5} /></span>
      <span className={`flex w-full flex-1 items-center pl-[3px] font-[Roboto] text-[10px] font-bold ${on ? "bg-[#1fbf68] text-white" : "bg-linear-to-b from-[#93a1a1] to-[#7f8c8c] text-[#222]"}`}>FX</span>
    </button>
  );
}

function RoutingButton({ r = "" }: { r?: string }) {
  return (
    <button aria-label="Routing" className="flex h-[34px] w-[45px] shrink-0 flex-col border border-black bg-[#151515]">
      <span className="flex h-[14px] w-full items-center justify-around bg-[#2d2d2d] px-[2px] font-[Roboto] text-[10px] font-bold">
        <span className={r.includes("M") ? "text-[#18804a]" : "text-[#4a4a4a]"}>M</span>
        <span className={r.includes("R") ? "text-[#a3a31c]" : "text-[#4a4a4a]"}>R</span>
        <span className={r.includes("S") ? "text-[#1f7296]" : "text-[#4a4a4a]"}>S</span>
      </span>
      <span className="flex w-full flex-1 items-center justify-center font-[Roboto] text-[8px] text-[#c2c2c2]">ROUTING</span>
    </button>
  );
}

function Fader({ y, name }: { y: number; name: string }) {
  return (
    <div className="relative mt-[3px] flex h-[247px] w-[21px] justify-center">
      <span className="absolute inset-y-0 left-[10px] w-px bg-black" />
      <span className="absolute inset-x-0 top-[79px] h-px bg-[#555]" />
      <input
        type="range" aria-label={`${name} fader`} min={0} max={202} defaultValue={202 - (y - 814)}
        className="relative h-[247px] w-[21px] appearance-none bg-transparent [direction:rtl] [writing-mode:vertical-lr] [&::-webkit-slider-thumb]:h-[45px] [&::-webkit-slider-thumb]:w-[21px] [&::-webkit-slider-thumb]:appearance-none [&::-webkit-slider-thumb]:rounded-xs [&::-webkit-slider-thumb]:border [&::-webkit-slider-thumb]:border-black [&::-webkit-slider-thumb]:bg-[linear-gradient(180deg,#4a4a4a_0,#c9c9c9_3px,#e0e0e0_6px,#777_9px,#4a4a4a_11px,#5a5a5a_16px,#808080_20px,#111_21px,#111_23px,#888_24px,#959595_28px,#f0f0f0_31px,#d8d8d8_34px,#666_38px,#333_43px)] [&::-webkit-slider-thumb]:shadow-[0_4px_3px_rgba(0,0,0,0.5)]"
      />
    </div>
  );
}

function Scale({ labels, y0, tops, className }: { labels: string[]; y0: number; tops?: [number, number]; className: string }) {
  return (
    <div className={`pointer-events-none absolute font-['Liberation_Sans'] text-[10px] font-bold ${className}`}>
      {labels.map((l, i) => {
        const lit = tops && Math.min(tops[0], tops[1]) < y0 + i * 23;
        return (
          <div key={l + i} className={`flex h-[23px] items-center justify-center ${lit ? "text-white [text-shadow:1px_1px_1px_#000]" : "text-[#707070]"}`}>
            {l}
          </div>
        );
      })}
    </div>
  );
}

const stripScale = ["-6-", "-12-", "-18-", "-24-", "-30-", "-36-", "-42-", "-48-", "-54-", "-60-"];

function Bar({ w, top, peak, thick }: { w: string; top?: number; peak?: number; thick?: boolean }) {
  return (
    <div className={`relative h-full ${w}`}>
      {top && <div className="absolute bottom-0 w-full bg-[#00f58f]" style={{ height: METER_BOTTOM - top }} />}
      {peak && <div className={`absolute w-full bg-[#12e08a] ${thick ? "h-1" : "h-[2px]"}`} style={{ bottom: METER_BOTTOM - peak - 1 }} />}
    </div>
  );
}

function SideButtons({ master }: { master?: boolean }) {
  return (
    <div className="flex flex-1 flex-col items-center">
      <button className="h-[22px] w-[22px] border border-[#5c5f60] bg-linear-to-b from-white to-[#dcdcdc] font-[Roboto] text-[13px] leading-5 font-medium text-[#4d2a22]">M</button>
      <button className="mt-[7px] h-[22px] w-[22px] border border-[#5c5f60] bg-linear-to-b from-white to-[#dcdcdc] font-[Roboto] text-[13px] leading-5 font-medium text-[#4a4f2d]">S</button>
      <button aria-label="Envelope" className="mt-[6px] flex h-[18px] w-[22px] items-center justify-center border border-[#5a6364] bg-linear-to-b from-[#9fb0b0] to-[#8d9a9a]"><EnvIcon /></button>
      <span className="h-[14px] font-['Open_Sans'] text-[11px] leading-3 text-[#4e5455]">trim</span>
      {!master && (
        <>
          <Phase />
          <button aria-label="Input monitor" className="mt-[83px] flex h-[19px] w-[19px] items-center justify-center border border-[#7d8586]"><RouteIcon /></button>
          <button className="mt-[6px] flex h-[30px] w-[19px] flex-col items-center bg-[#7f8788] font-[Roboto] text-[11px] leading-[13px] text-[#e8ebeb]">IN<DownCircle /></button>
          <svg viewBox="0 0 12 12" className="h-[11px] w-3"><path d="M6 0L9 1L8 6L10 7L4 12L3 5L5 6Z" fill="#727a7b" /></svg>
        </>
      )}
    </div>
  );
}

const cornerBlob = (
  <svg viewBox="0 0 24 38" className="pointer-events-none absolute top-[247px] left-full h-[38px] w-6 overflow-visible">
    <path d="M-1 0H0C0 7 3 10 8 10.500A13.500 13.500 0 1 1 8 37.500L-1 37.500Z" fill="#222" />
  </svg>
);

function ChannelStrip({ s }: { s: Strip }) {
  return (
    <article className="relative w-[91px] shrink-0 border-r border-[#2a2a2a]" aria-label={s.name}>
      <header className="h-[85px] border-l border-[#3f3f3f] bg-[#323232] pt-[6px] pr-[6px] pl-[5px]">
        <div className="flex justify-between"><FxButton on={s.fx} /><RoutingButton r={s.r} /></div>
        <div className="relative mt-[5px] flex h-4 items-center overflow-hidden rounded-r-full bg-[#262626]">
          <select aria-label="Input" className="w-[64px] appearance-none bg-transparent pl-1 text-xs leading-4 text-[#6c6c6c]"><option>Analog 1 (1</option></select>
          <svg viewBox="0 0 16 16" className="pointer-events-none absolute right-0 h-4 w-4"><circle cx="8" cy="8" r="7" fill="#353535" /><path d="M4.500 5.500H11.500L8 11.500Z" fill="#0c0c0c" /></svg>
        </div>
        <h3 className="-mx-2 flex h-6 items-center justify-center text-[13px] whitespace-nowrap text-[#d2d2d2]">{s.name}</h3>
      </header>
      <div className={`h-[347px] bg-linear-to-b ${s.sel ? "from-[#d3d6d8] to-[#c4c6c8]" : "from-[#a3acad] to-[#8f9797]"}`}>
        <div className="flex h-[55px] justify-center pt-[10px] text-[11px] text-[#4b5152]">
          <div className={`flex flex-col items-center ${s.w ? "w-[39px]" : ""}`}><Knob angle={s.ang} size={21} /><span className="font-['Open_Sans'] leading-[22px]">{s.pan}</span></div>
          {s.w && <div className="flex w-[39px] flex-col items-center"><Knob angle={s.wAng ?? 0} size={21} dim light /><span className="font-['Open_Sans'] leading-[22px]">{s.w}</span></div>}
        </div>
        <div className="flex">
          <div className="relative h-[285px] w-[59px] border-t border-black bg-[#232323]">
            <div className="h-[23px] text-center font-['Open_Sans'] text-[11px] leading-[23px] text-[#777]">{s.vol}</div>
            <div className="flex">
              <div className="w-[31px] pl-[3px]">
                <div className="-mx-[3px] h-[13px] text-center font-['Liberation_Sans'] text-[10px] leading-[13px] font-bold whitespace-nowrap text-[#7c7c7c]">{s.peak}</div>
                <div className="relative flex h-[244px] w-[25px] gap-[2px]">
                  <Bar w="w-3" top={s.m?.[0]} peak={s.pk?.[0]} />
                  <Bar w="w-3" top={s.m?.[1]} peak={s.pk?.[1]} />
                  <Scale labels={stripScale} y0={853} tops={s.m} className="top-[17px] left-0 w-[26px]" />
                </div>
              </div>
              <div className="pl-[2px]"><Fader y={s.fader} name={s.name} /></div>
            </div>
            {cornerBlob}
            <span className="absolute top-[259px] left-[55px] z-10"><RecordButton name={s.name} /></span>
          </div>
          <SideButtons />
        </div>
      </div>
      <div className="h-px bg-[#2a2a2a]" />
      {s.sel && <span className="absolute bottom-0 left-[42px] h-1 w-2 rounded-t-full border-x-2 border-t-2 border-[#333] bg-white" />}
    </article>
  );
}

const thumbH = "relative h-[11px] appearance-none bg-transparent w-full [&::-webkit-slider-thumb]:h-[11px] [&::-webkit-slider-thumb]:w-3 [&::-webkit-slider-thumb]:appearance-none [&::-webkit-slider-thumb]:rounded-xs [&::-webkit-slider-thumb]:border [&::-webkit-slider-thumb]:border-[#444] ";

function MasterStrip() {
  return (
    <article className="w-[137px] shrink-0 border-r border-[#2a2a2a]" aria-label="Master">
      <header className="h-[63px] bg-[#323232] pt-[6px] pl-[6px]">
        <div className="flex">
          <FxButton />
          <span className="ml-[6px]"><RoutingButton r="MS" /></span>
          <button className="ml-[7px] flex h-[34px] w-10 flex-col items-center bg-[#242424] pt-[2px] font-[Roboto] text-[8px] text-[#cdcdcd]">
            <svg viewBox="0 0 36 16" className="h-4 w-9"><path d="M0 0H36V16H0Z" fill="#93a1a1" /><path d="M10 4H13L17 2V14L13 11H10ZM27 4H24L20 2V14L24 11H27Z" fill="#4f5859" /></svg>
            <span className="leading-[15px]">MONO</span>
          </button>
        </div>
        <h3 className="flex h-[23px] items-center justify-center pr-1 text-[13px] text-[#d2d2d2]">MASTER</h3>
      </header>
      <div className="h-[369px] bg-linear-to-b from-[#a3acad] to-[#8f9797]">
        <div className="h-[77px] px-2 pt-[24px] text-center font-['Open_Sans'] text-[11px] leading-4">
          <div className="h-[15px] text-[#5e3b38]">100%L</div>
          <div className="relative flex h-3 items-center">
            <span className="absolute h-2 w-full bg-[#7d8586]" /><span className="absolute h-2 w-1/2 border-r border-[#333] bg-[#8e6561]" />
            <input type="range" aria-label="Left width" defaultValue={0} className={thumbH + "[&::-webkit-slider-thumb]:bg-[linear-gradient(90deg,#999,#ddd_4px,#b33_5px,#ddd_6px,#888)]"} />
          </div>
          <div className="relative flex h-3 items-center">
            <span className="absolute h-2 w-full bg-[#7d8586]" /><span className="absolute right-0 h-2 w-1/2 border-l border-[#333] bg-[#5d9a68]" />
            <input type="range" aria-label="Right width" defaultValue={100} className={thumbH + "[&::-webkit-slider-thumb]:bg-[linear-gradient(90deg,#999,#ddd_4px,#2a9a4a_5px,#ddd_6px,#888)]"} />
          </div>
          <div className="h-[14px] text-[#2f5a3a]">100%R</div>
        </div>
        <div className="flex">
          <div className="relative ml-[7px] h-[285px] w-[98px] border-t border-black bg-[#232323]">
            <div className="h-[23px] text-center font-['Open_Sans'] text-[11px] leading-[23px] text-[#777]">-6.35dB</div>
            <div className="flex">
              <div className="w-[72px] pl-1">
                <div className="flex h-[13px] justify-around pr-2 pl-1 font-['Liberation_Sans'] text-[10px] leading-[13px] font-bold text-[#7c7c7c]"><span>-9.9</span><span>-9.2</span></div>
                <div className="relative flex h-[244px]">
                  <Bar w="w-[9px]" top={913} /><span className="w-[6px]" />
                  <Bar w="w-[14px]" top={890} peak={871} thick /><span className="w-[7px]" />
                  <Bar w="w-[13px]" top={875} peak={869} thick /><span className="w-[7px]" />
                  <Bar w="w-[9px]" top={909} />
                  <span className="absolute top-[44px] left-0 h-[17px] w-[9px] bg-[#0b7d4d]" />
                  <span className="absolute top-[44px] left-[56px] h-[17px] w-[9px] bg-[#0b7d4d]" />
                  <Scale labels={["12", "6", "0", "6-", "12-", "18-", "24-", "30-", "36-", "42-"]} y0={837} tops={[913, 913]} className="top-px -left-px w-[18px]" />
                  <Scale labels={stripScale.slice(0, 9)} y0={853} tops={[876, 876]} className="top-[17px] left-[20px] w-[26px]" />
                  <Scale labels={["12", "6", "0", "-6", "-12", "-18", "-24", "-30", "-36", "-42"]} y0={837} tops={[909, 909]} className="top-px left-[50px] w-[18px]" />
                  <div className="absolute bottom-0 left-0 flex w-[60px] justify-around font-['Liberation_Sans'] text-[10px] leading-3 font-bold text-[#4f6a5c]"><span>-6.0</span><span>-6.1</span></div>
                </div>
              </div>
              <Fader y={897} name="Master" />
            </div>
            {cornerBlob}
            <button aria-label="Master settings" className="absolute top-[259px] left-[94px] z-10 flex h-6 w-6 items-center justify-center rounded-full border-2 border-[#222] bg-[#5e5e5e] text-[#d0d0d0]"><Settings size={15} strokeWidth={3} /></button>
          </div>
          <SideButtons master />
        </div>
      </div>
      <div className="h-px bg-[#2a2a2a]" />
    </article>
  );
}

/* ------------------------------------------------------------------ app */

export default function App() {
  return (
    <main className="flex min-h-screen w-full flex-col overflow-hidden bg-[#333] font-[Lato,'Open_Sans',sans-serif]">
      <svg className="absolute h-0 w-0" aria-hidden="true">
        <defs>
          <linearGradient id="knobLit" x1="0" x2="0" y1="0" y2="1"><stop offset="0" stopColor="#f0f0f0" /><stop offset="1" stopColor="#c4c6c6" /></linearGradient>
          <linearGradient id="knobDim" x1="0" x2="0" y1="0" y2="1"><stop offset="0" stopColor="#acb7b7" /><stop offset="1" stopColor="#818a8a" /></linearGradient>
        </defs>
      </svg>
      <div className="flex">
        <section className="w-[543px] shrink-0" aria-label="Tracks">
          <Toolbar />
          <ul className="ml-[2px] h-[547px] w-[532px] overflow-hidden">
            {tracks.map((t) => (
              <TrackRow key={t.n} t={t} />
            ))}
          </ul>
          <div className="mr-[9px] ml-[6px] h-[18px] border-t border-[#777] text-xs leading-4 text-[#b4b4b4]">Select time</div>
        </section>
        <Arrange />
      </div>
      <div className="h-[5px] border-b border-[#272727] bg-[#303030]" />
      <section className="flex flex-1 overflow-hidden" aria-label="Mixer">
        <MasterStrip />
        {strips.map((s) => (
          <ChannelStrip key={s.name} s={s} />
        ))}
      </section>
    </main>
  );
}
